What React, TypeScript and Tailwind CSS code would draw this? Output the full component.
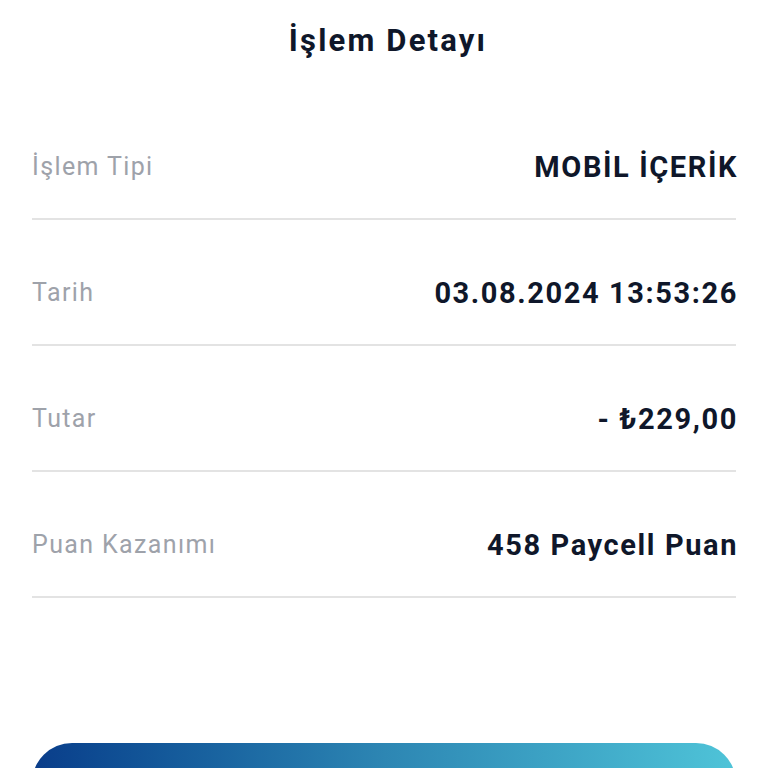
export default function App() {
  const rows = [
    { label: "İşlem Tipi", value: "MOBİL İÇERİK" },
    { label: "Tarih", value: "03.08.2024 13:53:26" },
    { label: "Tutar", value: "- ₺229,00" },
    { label: "Puan Kazanımı", value: "458 Paycell Puan" },
  ];

  return (
    <div className="w-[768px] h-[768px] overflow-hidden bg-white font-['Roboto',sans-serif]">
      {/* Header */}
      <div className="pt-[21px] h-[94px] pl-[8px]">
        <h1 className="text-center text-[31px] leading-[40px] font-bold tracking-[0.07em] text-[#0f172a]">
          İşlem Detayı
        </h1>
      </div>

      {/* Details */}
      <div className="px-[32px]">
        {rows.map((row) => (
          <div
            key={row.label}
            className="flex items-center justify-between pt-[59px] pb-[37px] border-b-2 border-[#e3e3e3]"
          >
            <span className="text-[25px] leading-[28px] tracking-[0.055em] text-[#9ea2aa]">{row.label}</span>
            <span className="text-[29px] leading-[28px] font-bold tracking-[0.055em] -mr-[2px] text-[#0f172a]">
              {row.value}
            </span>
          </div>
        ))}
      </div>

      {/* Button */}
      <div className="px-[32px] mt-[145px]">
        <button className="w-full h-[80px] rounded-[40px] bg-gradient-to-r from-[#0a3d8a] via-[#2d86b3] to-[#4fc4d8]" />
      </div>
    </div>
  );
}
